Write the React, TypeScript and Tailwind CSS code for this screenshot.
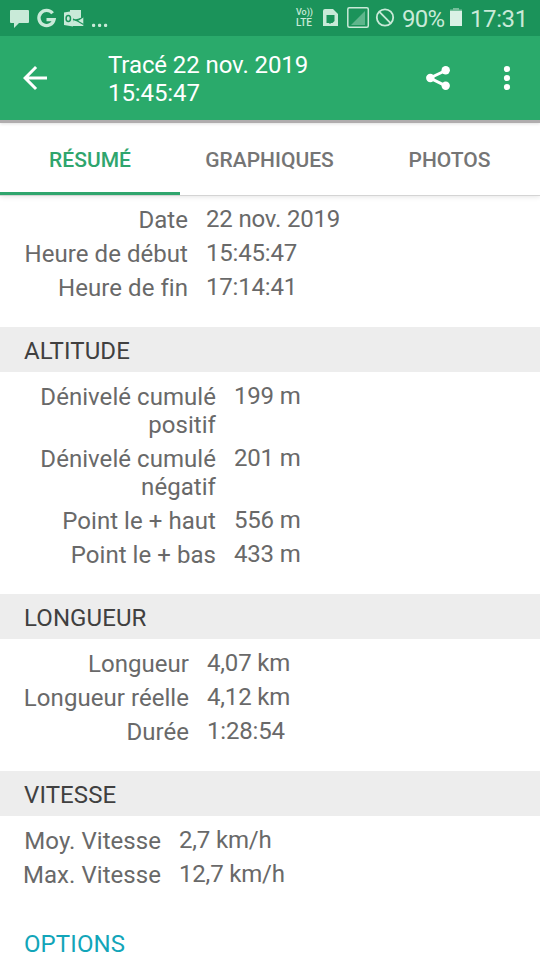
import clsx from "clsx";

type Row = { label: string; value: string };

const general: Row[] = [
  { label: "Date", value: "22 nov. 2019" },
  { label: "Heure de début", value: "15:45:47" },
  { label: "Heure de fin", value: "17:14:41" },
];

const altitude: Row[] = [
  { label: "Dénivelé cumulé positif", value: "199 m" },
  { label: "Dénivelé cumulé négatif", value: "201 m" },
  { label: "Point le + haut", value: "556 m" },
  { label: "Point le + bas", value: "433 m" },
];

const distance: Row[] = [
  { label: "Longueur", value: "4,07 km" },
  { label: "Longueur réelle", value: "4,12 km" },
  { label: "Durée", value: "1:28:54" },
];

const speed: Row[] = [
  { label: "Moy. Vitesse", value: "2,7 km/h" },
  { label: "Max. Vitesse", value: "12,7 km/h" },
];

const tabs = ["RÉSUMÉ", "GRAPHIQUES", "PHOTOS"];

function StatusBar() {
  return (
    <div className="flex h-9 shrink-0 items-center bg-[#1b935a] text-[#c9ead8]">
      <svg width="110" height="36" viewBox="0 0 110 36" fill="currentColor">
        <path d="M11 10h17a1 1 0 0 1 1 1v11a1 1 0 0 1-1 1h-9l-5 5v-5h-3a1 1 0 0 1-1-1V11a1 1 0 0 1 1-1z" />
        <path
          d="M52.600 13.300A7.600 7.600 0 1 0 54 19.600H46.500"
          fill="none"
          stroke="currentColor"
          strokeWidth="3.400"
        />
        {/* Outlook: envelope behind the O plate */}
        <path d="M70 10h11v8l-6 1.500-5-2z" />
        <path d="M73.500 20l3 1 6.800-4.200V26H72z" />
        <path d="M64 12.500l9-1.500v15.500L64 25z" />
        <path d="M73 19l4 1.800 6.500-4M77 20.800l6.500 3.700" fill="none" stroke="#1b935a" strokeWidth="1.200" />
        <ellipse cx="68.300" cy="18.500" rx="2.200" ry="3" fill="none" stroke="#1b935a" strokeWidth="1.500" />
        <rect x="92" y="23.700" width="3.200" height="3.200" rx="1.200" />
        <rect x="98" y="23.700" width="3.200" height="3.200" rx="1.200" />
        <rect x="104" y="23.700" width="3.200" height="3.200" rx="1.200" />
      </svg>
      <div className="ml-auto flex h-9 items-center">
        <div className="flex w-[20px] flex-col gap-px pl-px text-[9px] leading-[9px] font-medium">
          <span>Vo))</span>
          <span className="text-[10px] leading-[10px]">LTE</span>
        </div>
        <svg width="85" height="36" viewBox="315 0 85 36" fill="none" stroke="currentColor">
          <path d="M325 9h8l5 5v12h-15V11a2 2 0 0 1 2-2z" fill="currentColor" stroke="none" />
          <path d="M326.500 15h8v6l-2 2h-1.500l-1 1-1-1h-2.500z" fill="#1b935a" stroke="none" />
          <rect x="347.800" y="7.800" width="20.500" height="19.500" rx="1.500" strokeWidth="1.500" />
          <path d="M351 25l14-14v14z" fill="#5fb58c" stroke="none" />
          <circle cx="385" cy="17.500" r="8.200" strokeWidth="1.800" />
          <path d="M379.200 11.700l11.600 11.600" strokeWidth="1.800" />
        </svg>
        <span className="w-[50px] pt-[2px] pl-[2px] text-[24px] leading-9 tracking-[-0.7px]">90%</span>
        <svg width="14" height="36" viewBox="450 0 14 36">
          <path d="M453 8h6v1.500h3V12h-12V9.500h3z" fill="#76bf9b" />
          <rect x="450" y="11" width="12" height="15" fill="#daf1e5" />
        </svg>
        <span className="w-[76px] pt-[2px] pl-[6px] text-[24px] leading-9 tracking-[-0.4px]">17:31</span>
      </div>
    </div>
  );
}

function Toolbar() {
  return (
    <header className="relative z-10 flex h-[84px] shrink-0 items-center bg-[#2aaa6b] text-white shadow-[0_3px_0_#b0adae,0_4px_3px_rgba(0,0,0,0.12)]">
      <svg className="ml-[17px]" width="36" height="36" viewBox="0 0 24 24" fill="currentColor">
        <path d="M20 11H7.830l5.590-5.590L12 4l-8 8 8 8 1.410-1.410L7.830 13H20v-2z" />
      </svg>
      <h1 className="ml-[55px] w-[240px] pt-[2px] text-[24px] leading-[28px] tracking-[-0.09px]">
        Tracé 22 nov. 2019 15:45:47
      </h1>
      <svg className="ml-auto" width="28" height="28" viewBox="424 64 28 28" fill="currentColor">
        <path d="M445.700 70.500L430 78l15.700 7.800" fill="none" stroke="currentColor" strokeWidth="3" />
        <circle cx="430.300" cy="78" r="4.200" />
        <circle cx="445.700" cy="70.300" r="4.200" />
        <circle cx="445.700" cy="85.700" r="4.200" />
      </svg>
      <svg className="mr-[21px] ml-[43px]" width="24" height="36" viewBox="495 60 24 36" fill="currentColor">
        <circle cx="507" cy="69" r="3.100" />
        <circle cx="507" cy="78" r="3.100" />
        <circle cx="507" cy="87" r="3.100" />
      </svg>
    </header>
  );
}

function Tabs() {
  return (
    <nav className="grid h-[75px] shrink-0 grid-cols-3 bg-white shadow-[0_1px_0_#d4d4d4,0_2px_5px_rgba(0,0,0,0.1)]">
      {tabs.map((tab, i) => (
        <div
          key={tab}
          className={clsx(
            "flex items-center justify-center border-b-[3px] pt-[9px] text-[21px] font-medium",
            i === 0 ? "border-[#2fa56d] text-[#2fa56d]" : "border-transparent pr-px text-[#757575]",
          )}
        >
          {tab}
        </div>
      ))}
    </nav>
  );
}

function Rows({ rows, labelWidth }: { rows: Row[]; labelWidth: string }) {
  return (
    <dl className="flex flex-col gap-[6px] pt-[11px] pb-[25px] text-[24px] leading-[28px] text-[#696969]">
      {rows.map((row) => (
        <div key={row.label} className="flex gap-[18px]">
          <dt className={clsx("shrink-0 pl-5 text-right tracking-[0.05px]", labelWidth)}>{row.label}</dt>
          <dd className="-mt-px tracking-[-0.18px]">{row.value}</dd>
        </div>
      ))}
    </dl>
  );
}

function SectionTitle({ children }: { children: string }) {
  return (
    <h2 className="flex h-[45px] items-center bg-[#ededed] pt-[3px] pl-6 text-[24px] leading-[28px] tracking-[0.1px] text-[#404040]">
      {children}
    </h2>
  );
}

export default function App() {
  return (
    <div className="flex h-[960px] w-[540px] flex-col overflow-hidden bg-white font-[Roboto,sans-serif]">
      <StatusBar />
      <Toolbar />
      <Tabs />
      <main>
        <Rows rows={general} labelWidth="w-[188px]" />
        <SectionTitle>ALTITUDE</SectionTitle>
        <Rows rows={altitude} labelWidth="w-[216px]" />
        <SectionTitle>LONGUEUR</SectionTitle>
        <Rows rows={distance} labelWidth="w-[189px]" />
        <SectionTitle>VITESSE</SectionTitle>
        <Rows rows={speed} labelWidth="w-[161px]" />
        <button className="mt-4 ml-6 block text-[24px] leading-[28px] tracking-[0.1px] text-[#12a5b9]">
          OPTIONS
        </button>
      </main>
    </div>
  );
}
